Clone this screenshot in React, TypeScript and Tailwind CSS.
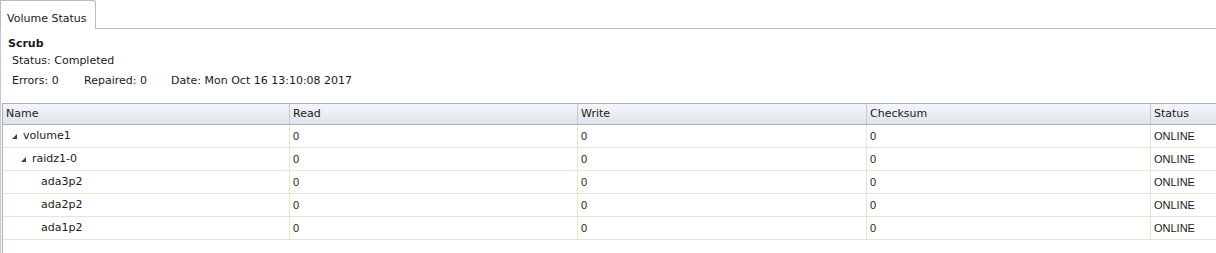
import React from "react";

const cols = "grid grid-cols-[287px_288px_289px_284px_1fr]";

function Tri() {
  return (
    <svg width="5" height="5" viewBox="0 0 5 5" className="mr-[6px] shrink-0">
      <polygon points="5,0 5,5 0,5" fill="#404040" />
    </svg>
  );
}

const rows = [
  { name: "volume1", indent: 9, tri: true },
  { name: "raidz1-0", indent: 18, tri: true },
  { name: "ada3p2", indent: 38, tri: false },
  { name: "ada2p2", indent: 38, tri: false },
  { name: "ada1p2", indent: 38, tri: false },
];

export default function App() {
  return (
    <div className="w-[1216px] h-[253px] bg-white overflow-hidden text-[11px] text-[#1a1a1a] font-['DejaVu_Sans',sans-serif]">
      <div className="flex h-[29px]">
        <div className="w-[96px] h-[29px] bg-white border-l border-t border-r border-[#b7bccb] rounded-tr-[3px] flex items-center pl-[6px] pt-[8px]">
          Volume Status
        </div>
        <div className="flex-1 border-b border-[#b7bccb]" />
      </div>
      <div className="border-l border-[#c4c8d4] h-[224px] flex flex-col">
        <div className="pl-[7px] mt-[7px] font-bold leading-[16px]">Scrub</div>
        <div className="pl-[11px] mt-[1px] leading-[16px]">Status: Completed</div>
        <div className="pl-[11px] mt-[4px] leading-[16px] flex">
          <span className="w-[72px]">Errors: 0</span>
          <span className="w-[87px]">Repaired: 0</span>
          <span>Date: Mon Oct 16 13:10:08 2017</span>
        </div>
        <div className="ml-[1px] mt-[14px] flex-1 border-l border-[#b0b0b0]">
          <div className={`${cols} h-[22px] border-t border-b border-[#a9b1bd] bg-gradient-to-b from-[#f4f6f9] to-[#dfe5ed]`}>
            {["Name", "Read", "Write", "Checksum", "Status"].map((h, i) => (
              <div key={h} className={`flex items-center pl-[3px] ${i < 4 ? "border-r border-[#c3c9d3]" : ""}`}>
                {h}
              </div>
            ))}
          </div>
          {rows.map((r) => (
            <div key={r.name} className={`${cols} h-[23px] border-b border-[#f0e0d0]`}>
              <div className="flex items-center border-r border-[#f0e0d0]" style={{ paddingLeft: r.indent }}>
                {r.tri ? <Tri /> : null}
                {r.name}
              </div>
              {["0", "0", "0"].map((v, i) => (
                <div key={i} className="flex items-center pl-[3px] border-r border-[#f0e0d0] font-['Liberation_Sans',sans-serif]">
                  {v}
                </div>
              ))}
              <div className="flex items-center pl-[3px] font-['Liberation_Sans',sans-serif]">ONLINE</div>
            </div>
          ))}
        </div>
      </div>
    </div>
  );
}
